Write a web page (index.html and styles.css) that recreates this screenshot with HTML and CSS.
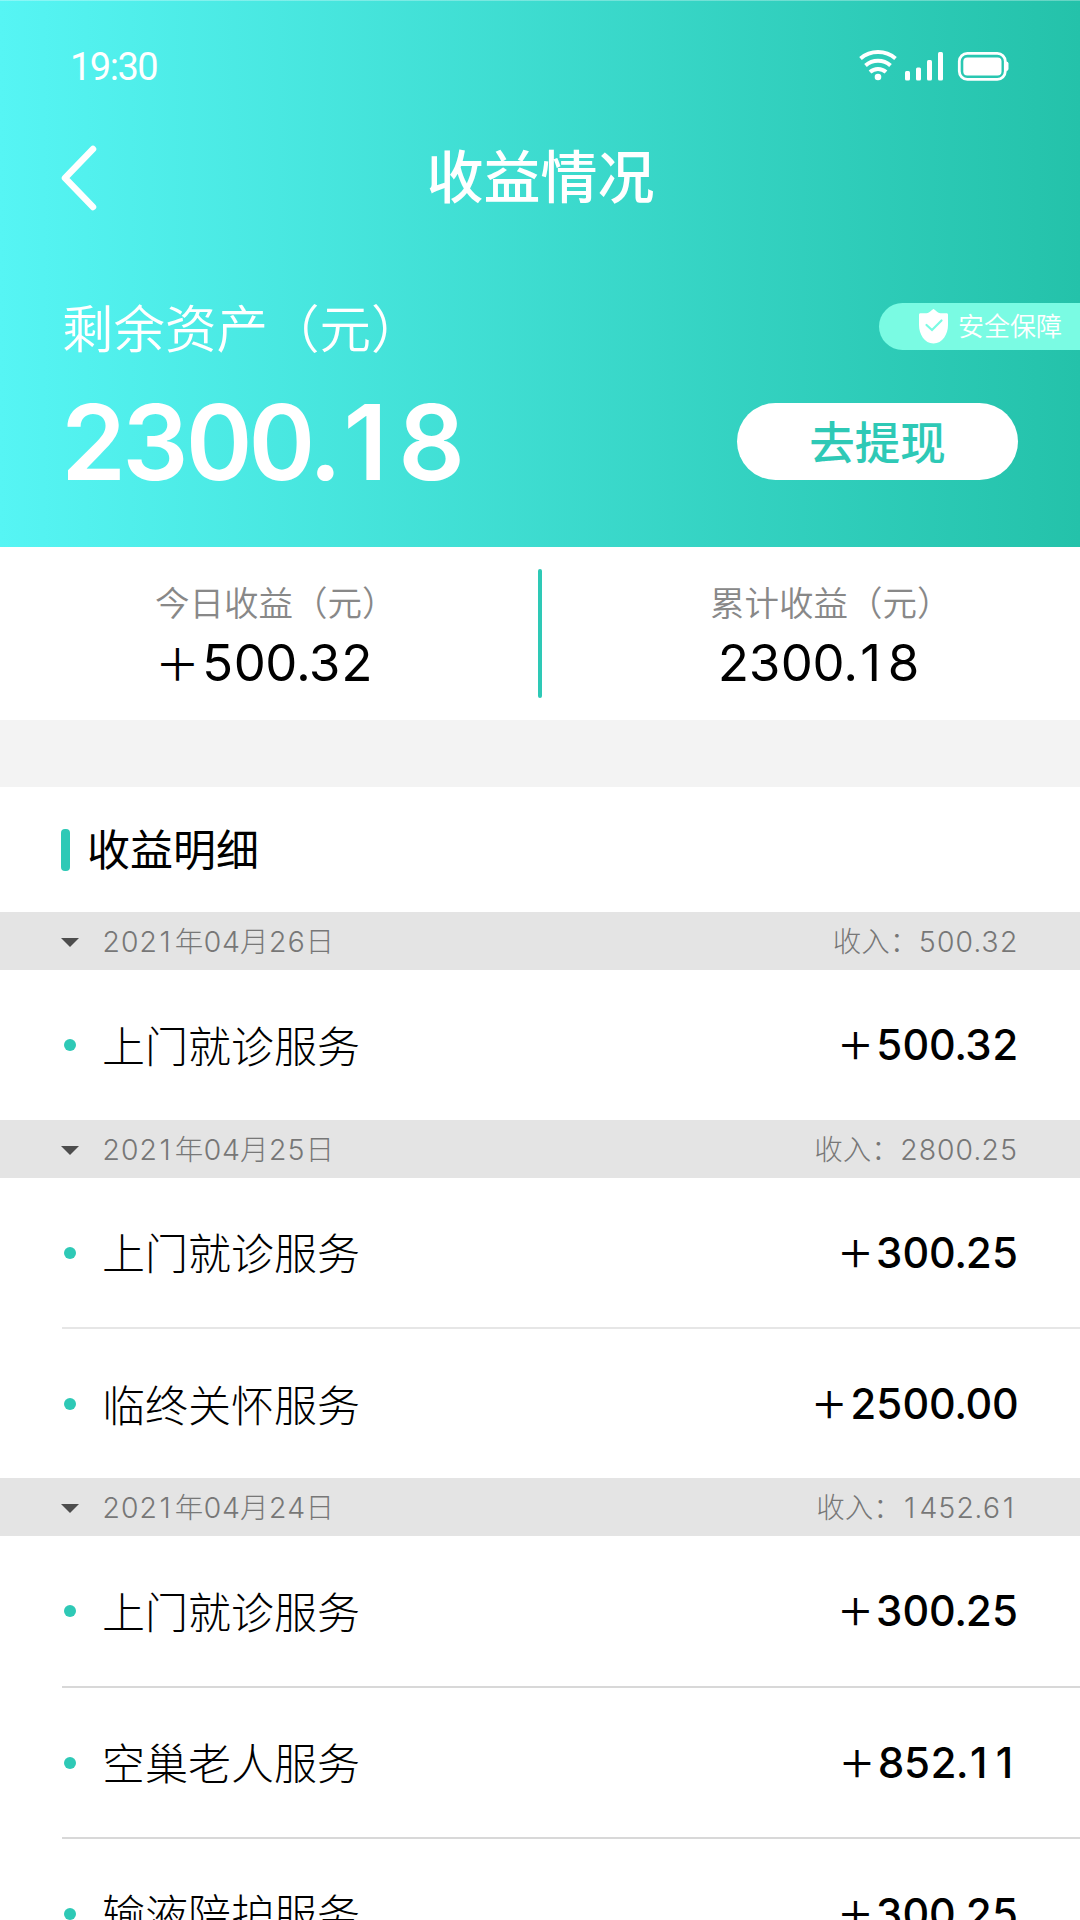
FILE: index.html
```html
<!DOCTYPE html>
<html lang="zh-CN">
<head>
    <meta charset="UTF-8">
    <meta name="viewport" content="width=device-width, initial-scale=1.0">
    <title>收益情况</title>
    <link rel="stylesheet" href="styles.css">
</head>
<body>
    <header class="header">
        <div class="status-bar">
            <span class="status-bar__time">19:30</span>
            <svg width="150" height="34" viewBox="0 0 150 34">
                <g fill="none" stroke="#fff" stroke-width="4">
                    <path d="M1.500 10.500a27 27 0 0 1 35 0"/>
                    <path d="M6.500 17.500a19 19 0 0 1 25 0"/>
                    <path d="M11 24a12 12 0 0 1 16 0"/>
                </g>
                <g fill="#fff">
                    <circle cx="19" cy="29" r="3.300"/>
                    <rect x="46" y="23" width="5" height="9.500" rx="1.500"/>
                    <rect x="57" y="19.500" width="5" height="13" rx="1.500"/>
                    <rect x="68" y="12" width="5" height="20.500" rx="1.500"/>
                    <rect x="79" y="4" width="5" height="28.500" rx="1.500"/>
                    <rect x="104.300" y="9.500" width="38.200" height="18" rx="4"/>
                    <path d="M147 13.500q2.500 0 2.500 2v5.500q0 2-2.500 2z"/>
                </g>
                <rect x="100.300" y="5.300" width="46" height="26" rx="8" fill="none" stroke="#fff" stroke-width="2.800"/>
            </svg>
        </div>
        <nav class="nav-bar">
            <svg width="36" height="66" viewBox="0 0 36 66">
                <path d="M32 4L4 33l28 29" fill="none" stroke="#fff" stroke-width="6.500" stroke-linecap="round" stroke-linejoin="round"/>
            </svg>
            <h1 class="nav-bar__title">收益情况</h1>
        </nav>
        <div class="asset-label">
            <span class="asset-label__text">剩余资产（元）</span>
            <div class="badge">
                <svg width="29" height="35" viewBox="0 0 29 35">
                    <path d="M14.500 0c1.200 0 3.500 4.200 7 4.200H27.500c1 0 1.500.6 1.500 1.600V16c0 9-5.500 18.500-14.500 18.500S0 25 0 16V5.800c0-1 .5-1.600 1.500-1.600H7.500c3.500 0 5.800-4.200 7-4.200z" fill="#fff"/>
                    <path d="M7.500 16l5.500 5 9.500-9.500" fill="none" stroke="#7afbe3" stroke-width="2.200" stroke-linecap="round"/>
                </svg>
                <span class="badge__text">安全保障</span>
            </div>
        </div>
        <div class="asset">
            <span class="asset__value">2300.<i>1</i>8</span>
            <button class="asset__btn">去提现</button>
        </div>
    </header>

    <section class="summary">
        <div class="summary__item">
            <span class="summary__label">今日收益（元）</span>
            <span class="summary__value"><span class="plus">＋</span>500.32</span>
        </div>
        <div class="summary__item summary__item--total">
            <span class="summary__label">累计收益（元）</span>
            <span class="summary__value">2300.<i>1</i>8</span>
        </div>
    </section>

    <main class="detail">
        <h2 class="detail__title">收益明细</h2>

        <div class="day">
            <span class="day__date">202<i>1</i>年04月26日</span>
            <span>收入：500.32</span>
        </div>
        <ul class="list">
            <li><span>上门就诊服务</span><b><span class="plus">＋</span>500.32</b></li>
        </ul>

        <div class="day">
            <span class="day__date">202<i>1</i>年04月25日</span>
            <span>收入：2800.25</span>
        </div>
        <ul class="list list--light">
            <li><span>上门就诊服务</span><b><span class="plus">＋</span>300.25</b></li>
            <li><span>临终关怀服务</span><b><span class="plus">＋</span>2500.00</b></li>
        </ul>

        <div class="day">
            <span class="day__date">202<i>1</i>年04月24日</span>
            <span>收入：<i>1</i>452.6<i>1</i></span>
        </div>
        <ul class="list">
            <li><span>上门就诊服务</span><b><span class="plus">＋</span>300.25</b></li>
            <li><span>空巢老人服务</span><b><span class="plus">＋</span>852.<i>1</i><i>1</i></b></li>
            <li><span>输液陪护服务</span><b><span class="plus">＋</span>300.25</b></li>
        </ul>
    </main>
</body>
</html>
```
FILE: styles.css
```css
* {
    box-sizing: border-box;
    margin: 0;
    padding: 0;
}

body {
    width: 1080px;
    height: 1920px;
    overflow: hidden;
    background-color: #fff;
    color: #000;
    font-family: Inter, "Noto Sans CJK SC", sans-serif;
    font-variant-numeric: tabular-nums;
}

/* tabular "1" has a foot, take the plain one in a cell of the same width */
i {
    display: inline-block;
    width: 0.61em;
    padding-right: 0.06em;
    font-style: normal;
    font-variant-numeric: normal;
    text-align: center;
}

.header {
    height: 547px;
    padding-top: 48px;
    background: linear-gradient(to right, #56f5f4, #24c2aa);
    box-shadow: inset 0 1px rgba(255, 255, 255, 0.3);
    color: #fff;
}

.status-bar {
    display: flex;
    justify-content: space-between;
    height: 38px;
    padding: 0 71px 0 70px;
}

.status-bar__time {
    font-family: Roboto, sans-serif;
    font-size: 38px;
    line-height: 39px;
    letter-spacing: -1.500px;
}

.nav-bar {
    display: flex;
    align-items: center;
    height: 84px;
    margin-top: 50px;
    padding: 0 60px 0 61px;
}

.nav-bar__title {
    flex: 1;
    margin-right: 36px;
    padding-bottom: 1px;
    font-size: 57px;
    font-weight: 500;
    line-height: 80px;
    text-align: center;
}

.asset-label {
    display: flex;
    align-items: center;
    justify-content: space-between;
    height: 70px;
    margin-top: 71px;
    padding-left: 62px;
    font-size: 51.500px;
    font-weight: 350;
}

.asset-label__text {
    padding-bottom: 2px;
}

.badge {
    display: flex;
    align-items: center;
    gap: 10px;
    width: 201px;
    height: 47px;
    padding-left: 40px;
    border-radius: 24px 0 0 24px;
    background-color: #7afbe3;
    font-size: 26px;
}

.badge__text {
    padding-bottom: 3px;
}

.asset {
    display: flex;
    align-items: center;
    justify-content: space-between;
    height: 77px;
    margin-top: 42px;
    padding: 0 62px 0 60px;
}

.asset__value {
    font-size: 104px;
    font-weight: 600;
    letter-spacing: -4.500px;
}

.asset__btn {
    width: 281px;
    height: 77px;
    padding-bottom: 4px;
    border: none;
    border-radius: 39px;
    background-color: #fff;
    color: #2ec9b6;
    font-family: inherit;
    font-size: 45.500px;
    font-weight: 500;
}

.summary {
    display: grid;
    grid-template-columns: 540px 540px;
    height: 240px;
    padding-top: 22px;
    border-bottom: 67px solid #f3f3f3;
}

.summary__item {
    display: flex;
    flex-direction: column;
    height: 129px;
    padding-left: 155px;
}

.summary__item--total {
    position: relative;
    padding-left: 170px;
}

.summary__item--total::before {
    content: "";
    position: absolute;
    top: 0;
    left: -2px;
    width: 4px;
    height: 129px;
    border-radius: 2px;
    background-color: #2ec9b6;
}

.summary__label {
    margin-top: 10px;
    color: #888;
    font-size: 34.500px;
    font-weight: 350;
    line-height: 50px;
}

.summary__value {
    font-size: 51px;
    line-height: 68px;
    letter-spacing: -1.400px;
}

.summary__item--total .summary__value {
    padding-left: 7px;
}

.plus {
    margin-right: 3px;
    font-size: 0.88em;
}

.detail__title {
    display: flex;
    align-items: center;
    gap: 17px;
    height: 125px;
    padding: 0 0 5px 61px;
    font-size: 43px;
    font-weight: 400;
}

.detail__title::before {
    content: "";
    width: 9px;
    height: 42px;
    margin-top: 5px;
    border-radius: 4px;
    background-color: #2ec9b6;
}

.day {
    display: flex;
    align-items: center;
    justify-content: space-between;
    height: 58px;
    padding: 0 62px 3px 61px;
    background-color: #e4e4e4;
    color: #777;
    font-size: 28.500px;
    font-weight: 300;
}

.day__date::before {
    content: "";
    display: inline-block;
    margin-right: 23px;
    border: 9px solid transparent;
    border-top-color: #4d4d4d;
    border-bottom: none;
    vertical-align: 5px;
}

.list {
    list-style: none;
}

.list li {
    display: flex;
    align-items: center;
    height: 149.500px;
    margin-left: 62px;
    padding: 0 62px 2px 0;
    font-size: 43px;
    font-weight: 300;
}

.list li::before {
    content: "";
    width: 12px;
    height: 12px;
    margin: 3px 26px 0 2px;
    border-radius: 50%;
    background-color: #2ec9b6;
}

.list li + li {
    height: 151px;
    border-top: 2px solid #d8d8d8;
}

.list--light li + li {
    border-top-color: #e6e6e6;
}

.list b {
    margin-left: auto;
    padding-top: 1px;
    font-size: 42px;
    font-weight: 500;
    letter-spacing: -0.900px;
}
```
